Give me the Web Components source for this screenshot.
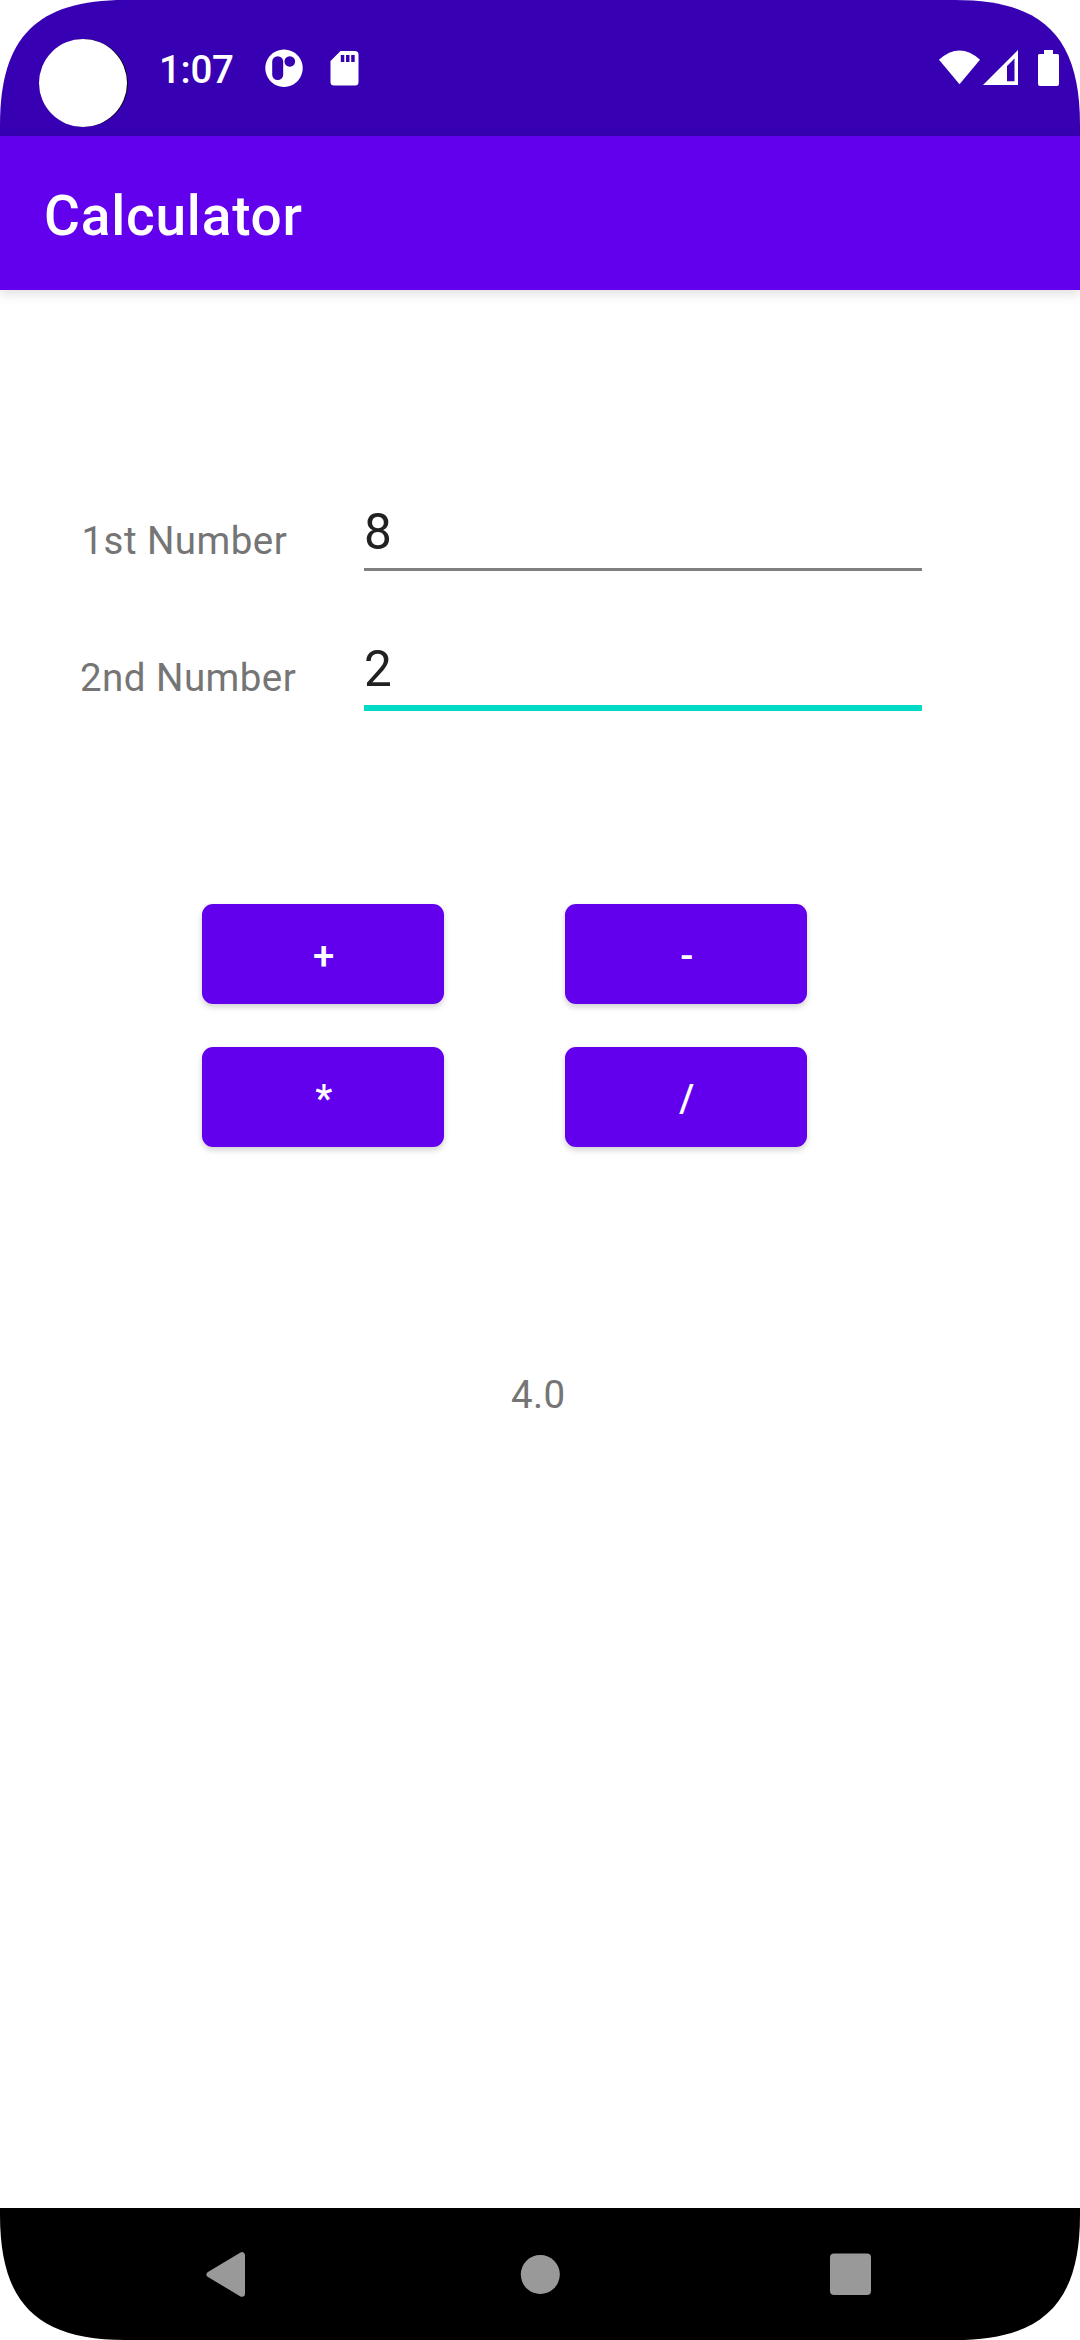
<!DOCTYPE html>
<html lang="en"><head><meta charset="utf-8"><title>Calculator</title>
<style>html,body{margin:0;background:#fff}body{font-family:Roboto,"Liberation Sans",sans-serif}</style></head>
<body>
<phone-screen>
  <status-bar slot="status" time="1:07"></status-bar>
  <app-bar slot="appbar">Calculator</app-bar>
  <number-field label="1st Number" value="8" style="--inset:1.5px"></number-field>
  <number-field label="2nd Number" value="2" active></number-field>
  <key-pad><op-button>+</op-button><op-button>-</op-button><op-button>*</op-button><op-button>/</op-button></key-pad>
  <result-text>4.0</result-text>
  <nav-bar slot="nav"></nav-bar>
</phone-screen>
<script>
function define(name, html) {
  customElements.define(name, class extends HTMLElement {
    constructor() {
      super();
      const root = this.attachShadow({ mode: 'open' });
      root.innerHTML = html;
    }
    connectedCallback() {
      this.shadowRoot.querySelectorAll('[data-attr]').forEach(n => {
        n.textContent = this.getAttribute(n.dataset.attr);
      });
    }
  });
}
define('phone-screen', `<style>
:host{display:flex;flex-direction:column;width:1080px;height:2340px;background:#fff;overflow:hidden;
clip-path:path('M0 125C0 37 37 0 125 0H955C1043 0 1080 37 1080 125V2215C1080 2303 1043 2340 955 2340H125C37 2340 0 2303 0 2215Z')}
main{flex:1;display:flex;flex-direction:column;padding-top:200px;box-sizing:border-box}
</style><slot name="status"></slot><slot name="appbar"></slot><main><slot></slot></main><slot name="nav"></slot>`);
define('status-bar', `<style>
:host{display:flex;height:136px;background:#3700b3;color:#fff;flex:none}
svg{display:block;flex:none}
.cam{margin:39px 0 0 39px}
.time{font-size:38.5px;font-weight:500;line-height:46px;letter-spacing:-.3px;margin:47px 0 0 31px;width:106px;white-space:nowrap}
.right{margin:50px 20px 0 auto}
</style>
<svg class="cam" width="89" height="89"><circle cx="45" cy="44" r="43.9" fill="#000"/><circle cx="44" cy="44" r="44" fill="#fff"/></svg>
<span class="time" data-attr="time"></span>
<svg style="margin-top:49px" width="38" height="39"><path fill="#fff" fill-rule="evenodd" d="M19 .5a18.7 18.7 0 1 0 .01 0ZM12.7 7.2a5.5 5.5 0 0 1 5.5 5.5V25.5a5.5 5.5 0 0 1-11 0V12.7a5.5 5.5 0 0 1 5.5-5.5ZM24.8 7.2a5.3 5.3 0 1 1-.01 0Z"/></svg>
<svg style="margin:51px 0 0 27px" width="29" height="35"><path fill="#fff" fill-rule="evenodd" d="M10.5 0H25a3.5 3.5 0 0 1 3.500 3.500V31a3.500 3.500 0 0 1-3.500 3.500H4A3.500 3.500 0 0 1 .5 31V10ZM10.800 4v7h3.500V4ZM16 4v7h3.500V4ZM21.200 4v7h3.500V4Z"/></svg>
<svg class="right" width="122" height="36" viewBox="937 50 122 36"><g fill="#fff"><path d="M938 59.7Q958.500 41.300 979 59.700L958.500 84.300Z"/><path fill-rule="evenodd" d="M982 85L1017 50V85ZM1006 66V81.300H1013.500V58.500Z"/><path d="M1043 50h9v4h4.500a1.500 1.500 0 0 1 1.500 1.500v28.500a2 2 0 0 1-2 2h-17a2 2 0 0 1-2-2v-28.500a1.500 1.500 0 0 1 1.500-1.500h4.500z"/></g></svg>`);
define('app-bar', `<style>
:host{display:flex;align-items:center;height:154px;box-sizing:border-box;padding:5px 0 0 44px;background:#6200ee;color:#fff;font-size:55px;font-weight:500;letter-spacing:.8px;box-shadow:0 4px 11px rgba(0,0,0,.13);flex:none}
</style><slot></slot>`);
define('number-field', `<style>
:host{display:flex;height:137px;padding-left:80px;flex:none}
.label{width:284px;box-sizing:border-box;font-size:38.5px;line-height:46px;letter-spacing:.45px;color:#757575;padding:28px 0 0 var(--inset,0)}
.box{width:558px;height:81px;border-bottom:3px solid #808080;box-sizing:border-box;font-size:49.5px;line-height:58px;color:#212121;padding-top:13px}
:host([active]) .box{height:84px;border-bottom:6px solid #03dac5}
</style><span class="label" data-attr="label"></span><div class="box" data-attr="value"></div>`);
define('key-pad', `<style>
:host{display:grid;grid-template-columns:242px 242px;grid-auto-rows:100px;gap:43px 121px;margin:140px 0 0 202px}
</style><slot></slot>`);
define('op-button', `<style>
:host{display:block}
button{all:unset;display:flex;align-items:center;justify-content:center;box-sizing:border-box;width:100%;height:100%;padding:2px 0 0 5px;border-radius:11px;background:#6200ee;color:#fff;font-size:38.5px;font-weight:500;letter-spacing:3.44px;box-shadow:0 3px 6px rgba(0,0,0,.19)}
</style><button><slot></slot></button>`);
define('result-text', `<style>
:host{display:block;margin:225px 0 0 511px;font-size:38.5px;line-height:46px;letter-spacing:.3px;color:#757575}
</style><slot></slot>`);
define('nav-bar', `<style>
:host{display:block;height:132px;background:#000;flex:none}svg{display:block}
</style><svg width="1080" height="132" fill="#999"><path d="M209.500 66.500L242 47.200V85.800Z" stroke="#999" stroke-width="6" stroke-linejoin="round"/><circle cx="540.300" cy="66.500" r="19.500"/><rect x="830" y="45.500" width="41" height="41.500" rx="4"/></svg>`);
</script></body></html>
